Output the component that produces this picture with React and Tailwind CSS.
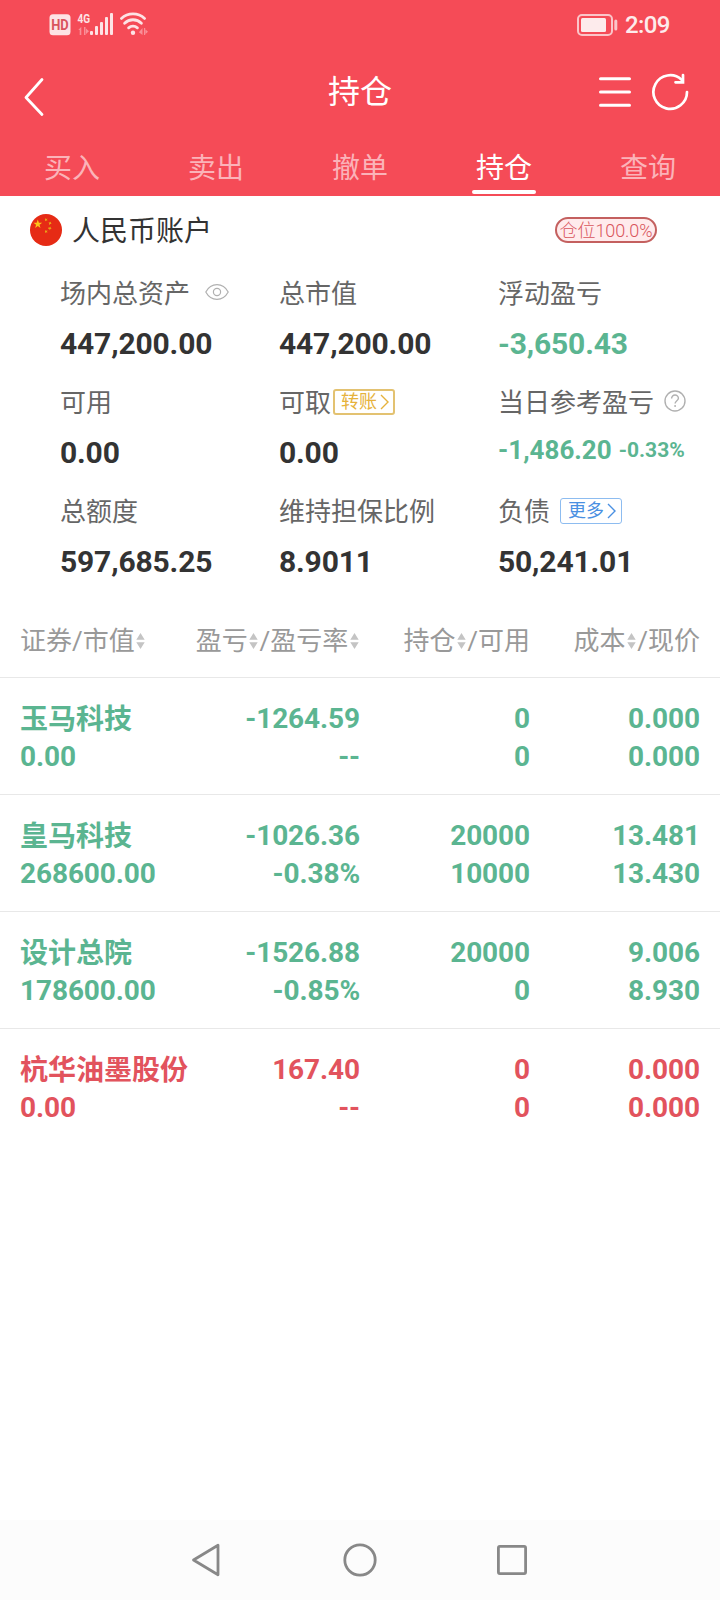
import React from 'react';

const tabs = ['买入', '卖出', '撤单', '持仓', '查询'];

const positions = [
  { name: '玉马科技', value: '0.00', pl: '-1264.59', rate: '--', hold: '0', avail: '0', cost: '0.000', price: '0.000' },
  { name: '皇马科技', value: '268600.00', pl: '-1026.36', rate: '-0.38%', hold: '20000', avail: '10000', cost: '13.481', price: '13.430' },
  { name: '设计总院', value: '178600.00', pl: '-1526.88', rate: '-0.85%', hold: '20000', avail: '0', cost: '9.006', price: '8.930' },
  { name: '杭华油墨股份', value: '0.00', pl: '167.40', rate: '--', hold: '0', avail: '0', cost: '0.000', price: '0.000', up: true },
];

const StatusBar = () => (
  <div className="h-12 flex items-center justify-between pl-[49px] pr-[50px] pt-0.5">
    <svg width="100" height="32" viewBox="0 -3 100 32" fill="none">
      <rect x="0.5" y="2.2" width="21" height="21" rx="3.5" fill="#fde3e5" />
      <text x="11" y="17.8" textAnchor="middle" fontSize="14" fontWeight="700" fill="#d9535d" textLength="17.5" lengthAdjust="spacingAndGlyphs">HD</text>
      <text x="28.6" y="10.8" fontSize="12.5" fontWeight="700" fill="#fde3e5" textLength="12.6" lengthAdjust="spacingAndGlyphs">4G</text>
      <g fill="#f98f98">
        <path d="M29.3 18l3-3.2v8.2h-1.6v-5zM35 15h1.5v8H35zM37 16.5l3 2.7-3 2.8z" />
        <path d="M93.5 16v7l-3.6-2.8zM95 16h1.2v7H95zM96.5 17.5l2.500 2.200-2.500 2.300z" />
      </g>
      <g fill="#fde3e5">
        <rect x="41" y="19" width="3" height="4" rx="1" />
        <rect x="46" y="14" width="3" height="9" rx="1" />
        <rect x="51" y="10" width="3" height="13" rx="1" />
        <rect x="56" y="5" width="3" height="18" rx="1" />
        <rect x="61" y="1" width="3" height="22" rx="1" />
        <circle cx="84" cy="20.8" r="2.2" />
      </g>
      <g stroke="#fde3e5" strokeWidth="2.8" strokeLinecap="round">
        <path d="M72.4 6.4a17 17 0 0 1 23.2 0" />
        <path d="M75.6 11.2a12 12 0 0 1 16.8 0" />
        <path d="M79.6 15.8a7 7 0 0 1 8.800 0" />
      </g>
    </svg>
    <div className="flex items-center gap-[7px]">
      <svg width="41" height="22" viewBox="0 0 41 22" fill="none">
        <rect x="1" y="1" width="34" height="20" rx="4" stroke="#fbc5c9" strokeWidth="2" />
        <rect x="4" y="4" width="25" height="14" rx="1.5" fill="#fdebec" />
        <rect x="37.3" y="5.5" width="3" height="11" rx="1.5" fill="#fbc5c9" />
      </svg>
      <span className="text-2xl leading-6 font-medium text-[#fdebec] w-[45px] tracking-[-0.6px]">2:09</span>
    </div>
  </div>
);

const Header = () => (
  <header className="h-[196px] bg-[#f54b57] text-white">
    <StatusBar />
    <div className="h-[88px] grid grid-cols-3 items-center">
      <svg className="ml-6 mt-2.5" width="22" height="40" viewBox="0 0 22 40" fill="none" stroke="#fff" strokeWidth="2.8" strokeLinecap="round" strokeLinejoin="round">
        <path d="M18 2.500L2 20.500l16 17" />
      </svg>
      <h1 className="text-[32px] leading-10 text-center">持仓</h1>
      <div className="flex items-center justify-end gap-5 pr-[31px]">
        <svg width="32" height="32" viewBox="0 0 32 32" stroke="#fff" strokeWidth="3" strokeLinecap="round">
          <path d="M1.5 2.7h29M1.5 16h29M1.5 29.3h29" />
        </svg>
        <svg width="38" height="38" viewBox="0 0 38 38" fill="none" stroke="#fff" strokeWidth="2.7" strokeLinecap="round">
          <path d="M36 19A16.8 16.8 0 1 1 30.6 6.7" />
          <path d="M32 2v7.3h-7.5" />
        </svg>
      </div>
    </div>
    <nav className="h-[60px] grid grid-cols-5">
      {tabs.map((tab) => (
        <div key={tab} className="flex flex-col items-center pt-[13px]">
          <span className={`text-[28px] leading-10 ${tab === '持仓' ? 'text-white' : 'text-[#fbb3b9]'}`}>{tab}</span>
          {tab === '持仓' && <span className="mt-px w-16 h-1 rounded-full bg-white" />}
        </div>
      ))}
    </nav>
  </header>
);

const Flag = () => (
  <svg width="32" height="32" viewBox="0 0 32 32">
    <circle cx="16" cy="16" r="16" fill="#e62b15" />
    <path fill="#fcc419" d="M7.8 5.5l1.1 3.2h3.3l-2.7 2 1 3.3-2.7-2-2.7 2 1-3.3-2.7-2h3.3z" />
    <g fill="#e8a317">
      <path d="M15 4.3l1.3.6 1.2-.5-.6 1.3.5 1.1-1.3-.4-1.1.8v-1.4z" />
      <path d="M18.7 7.9l1.2.5 1.2-.8-.2 1.4.7 1-1.4.1-.7 1.1-.4-1.4z" />
      <path d="M18.5 13.1l1.2.3 1-.9v1.4l1 .8-1.3.4-.5 1.2-.7-1.2-1.3-.2.8-.9z" />
      <path d="M15.1 16.2l1.2.6 1.2-.5-.5 1.2.4 1.2-1.3-.4-1.1.7v-1.4z" />
    </g>
  </svg>
);

const EyeIcon = () => (
  <svg className="ml-[15px] -mt-1" width="24" height="18" viewBox="0 0 24 18" fill="none" stroke="#b0b0b0" strokeWidth="1.2">
    <path d="M.8 9C3.5 4 8 1.7 12 1.7S20.5 4 23.2 9c-2.7 5-7.2 7.3-11.2 7.3S3.5 14 .8 9z" />
    <circle cx="12" cy="9" r="3.6" />
  </svg>
);

const HelpIcon = () => (
  <svg className="ml-2.5 -mt-[5px]" width="22" height="22" viewBox="0 0 22 22" fill="none" stroke="#b0b0b0" strokeWidth="1.4">
    <circle cx="11" cy="11" r="10" />
    <path d="M7.6 8.6C7.6 6.4 9.2 5 11 5s3.4 1.4 3.4 3.2c0 2.4-3.3 2.6-3.3 5.3M11.1 15v2" />
  </svg>
);

const LinkTag = ({ children, className }) => (
  <span className={`h-[26px] w-[62px] flex items-center rounded-[3px] -mt-[3px] text-lg leading-6 ${className}`}>
    {children}
    <svg className="ml-[3px] shrink-0" width="9" height="16" viewBox="0 0 9 16" fill="none" stroke="currentColor" strokeWidth="1.4">
      <path d="M1 1l7 7-7 7" />
    </svg>
  </span>
);

const Stat = ({ label, extra, children, className = 'text-[#333]' }) => (
  <div className="h-[90px]">
    <div className="h-10 flex items-center text-[26px] text-[#666] whitespace-nowrap">
      <span className="leading-10">{label}</span>
      {extra}
    </div>
    <div className={`mt-2.5 text-[30px] leading-10 font-bold tracking-[-0.15px] whitespace-nowrap ${className}`}>{children}</div>
  </div>
);

const Sort = () => (
  <svg className="mx-[1.4px] -mt-0.5" width="9" height="16" viewBox="0 0 9 16" fill="#c4c4c4">
    <path d="M4.5 0L8.7 6.7H.3zM4.5 16L8.7 9.3H.3z" />
  </svg>
);

const Account = () => (
  <section>
    <div className="h-[68px] flex items-center pl-[30px] pr-[63px]">
      <Flag />
      <h2 className="ml-2.5 mt-[3px] text-[28px] leading-10 text-[#333]">人民币账户</h2>
      <span className="ml-auto w-[102px] h-[26px] rounded-full border-2 border-[#c4605f] bg-[#ffebec] text-[#d9555c] text-lg leading-[24px] font-light tracking-[-0.1px] text-center whitespace-nowrap">
        仓位100.0%
      </span>
    </div>
    <div className="mt-2.5 pl-[60px] grid grid-cols-[219px_219px_219px] gap-y-[19px]">
      <Stat label="场内总资产" extra={<EyeIcon />}>447,200.00</Stat>
      <Stat label="总市值">447,200.00</Stat>
      <Stat label="浮动盈亏" className="text-[#5bb591]">-3,650.43</Stat>
      <Stat label="可用">0.00</Stat>
      <Stat label="可取" extra={<LinkTag className="ml-0.5 pl-1.5 border-2 border-[#e3c271] text-[#e6b23c]">转账</LinkTag>}>0.00</Stat>
      <Stat label="当日参考盈亏" extra={<HelpIcon />} className="text-[#5bb591]">
        <div className="flex items-center -mt-[3px] tracking-normal">
          <span className="text-[26px] leading-10">-1,486.20</span>
          <span className="ml-[7px] text-[21px] leading-10">-0.33%</span>
        </div>
      </Stat>
      <Stat label="总额度">597,685.25</Stat>
      <Stat label="维持担保比例">8.9011</Stat>
      <Stat label="负债" extra={<LinkTag className="ml-2.5 pl-[7px] border border-[#8dbcf0] text-[#4a90e2]">更多</LinkTag>}>50,241.01</Stat>
    </div>
  </section>
);

const Positions = () => (
  <section className="mt-5">
    <div className="h-[76px] pt-0.5 px-5 grid grid-cols-4 border-b border-[#e8e8e8] text-[26px] leading-[73px] text-[#999] whitespace-nowrap">
      <div className="flex items-center pt-px">证券/市值<Sort /></div>
      <div className="flex items-center justify-end pt-px">盈亏<Sort />/盈亏率<Sort /></div>
      <div className="flex items-center justify-end pt-px">持仓<Sort />/可用</div>
      <div className="flex items-center justify-end pt-px">成本<Sort />/现价</div>
    </div>
    {positions.map((p, i) => (
      <div
        key={p.name}
        className={`h-[117px] pt-[22px] px-5 grid grid-cols-4 content-start text-[28px] leading-[38px] font-bold tracking-[-0.1px] text-right whitespace-nowrap ${
          p.up ? 'text-[#e2535d]' : 'text-[#5bb591]'
        } ${i < positions.length - 1 ? 'border-b border-[#e8e8e8]' : ''}`}
      >
        <span className="text-left pt-0.5 leading-9 tracking-normal">{p.name}</span>
        <span>{p.pl}</span>
        <span>{p.hold}</span>
        <span>{p.cost}</span>
        <span className="text-left">{p.value}</span>
        <span>{p.rate}</span>
        <span>{p.avail}</span>
        <span>{p.price}</span>
      </div>
    ))}
  </section>
);

const SystemNav = () => (
  <footer className="mt-auto h-20 bg-[#fcfcfc] flex items-center justify-center gap-[117px]">
    <svg width="36" height="36" viewBox="0 0 36 36" fill="none" stroke="#888" strokeWidth="2.8" strokeLinejoin="round">
      <path d="M4.5 18L29 3.2v29.6z" />
    </svg>
    <svg width="36" height="36" viewBox="0 0 36 36" fill="none" stroke="#888" strokeWidth="2.8">
      <circle cx="18" cy="18" r="15.2" />
    </svg>
    <svg width="36" height="36" viewBox="0 0 36 36" fill="none" stroke="#888" strokeWidth="2.8">
      <rect x="3.4" y="4.4" width="27.2" height="27.2" rx="1.5" />
    </svg>
  </footer>
);

const App = () => (
  <div className="w-[720px] h-[1600px] flex flex-col bg-white overflow-hidden font-[Roboto,'Noto_Sans_CJK_SC',sans-serif]">
    <Header />
    <Account />
    <Positions />
    <SystemNav />
  </div>
);

export default App;
